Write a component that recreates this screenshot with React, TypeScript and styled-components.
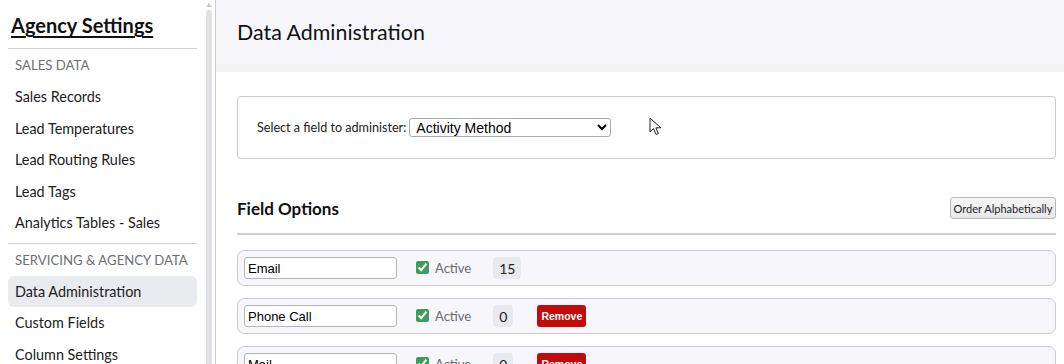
import React from "react";
import styled, { createGlobalStyle } from "styled-components";

const Global = createGlobalStyle`
  html, body { margin: 0; padding: 0; height: 100%; overflow: hidden; }
  body { font-family: "Lato", "Noto Sans", sans-serif; color: #212529; background: #fff; }
  * { box-sizing: border-box; }
`;

const Page = styled.div`
  display: flex;
  height: 100vh;
  overflow: hidden;
`;

const Sidebar = styled.aside`
  width: 216px;
  flex: 0 0 216px;
  height: 100%;
  display: flex;
  border-right: 1px solid #cfcfcf;
  overflow: hidden;
`;

const Nav = styled.nav`
  flex: 1;
  padding: 0 8px;
  min-width: 0;
`;

const ScrollTrack = styled.div`
  flex: 0 0 10px;
  display: flex;
  flex-direction: column;
  align-items: center;
  padding: 3px 3px 0 1px;
  gap: 3px;
`;

const ScrollArrow = styled.div`
  width: 0;
  height: 0;
  border-left: 3px solid transparent;
  border-right: 3px solid transparent;
  border-bottom: 4px solid #c8c8c8;
`;

const ScrollThumb = styled.div`
  flex: 1;
  width: 6px;
  background: #dfe1e4;
  border-radius: 3px 3px 0 0;
`;

const SideTitle = styled.h2`
  margin: 0;
  height: 48px;
  padding: 13px 0 0 3px;
  font-size: 20px;
  line-height: 24px;
  font-weight: 700;
  text-decoration: underline;
  text-underline-offset: 3px;
  text-decoration-thickness: 2px;
  color: #111;
`;

const Divider = styled.div<{ $top?: number }>`
  height: 1px;
  background: #cfcfcf;
  margin-top: ${(p) => p.$top ?? 0}px;
`;

const SectionHead = styled.div`
  height: 32px;
  line-height: 32px;
  padding: 0 7px;
  font-size: 13.2px;
  color: #6c6f74;
  text-transform: uppercase;
  white-space: nowrap;
`;

const NavItem = styled.div<{ $active?: boolean }>`
  height: 31.5px;
  line-height: 31.5px;
  padding: 0 7px;
  font-size: 14.4px;
  color: #1c1c1c;
  border-radius: 6px;
  white-space: nowrap;
  background: ${(p) => (p.$active ? "#e9ebef" : "transparent")};
`;

const Main = styled.main`
  flex: 1;
  display: flex;
  flex-direction: column;
  min-width: 0;
  position: relative;
`;

const Header = styled.header`
  flex: 0 0 72px;
  height: 72px;
  background: #f7f7fb;
  border-bottom: 8px solid #f4f4f4;
  padding: 0 21px;
  display: flex;
  align-items: center;
`;

const PageTitle = styled.h1`
  margin: 0;
  font-size: 21.4px;
  font-weight: 400;
  color: #111;
`;

const Content = styled.div`
  flex: 0 0 auto;
  padding: 24px 8px 0 21px;
  display: flex;
  flex-direction: column;
`;

const Card = styled.section`
  height: 63px;
  border: 1px solid #cccccc;
  border-radius: 4px;
  padding: 0 19px;
  display: flex;
  align-items: center;
  gap: 3px;
`;

const Label = styled.label`
  font-size: 12.6px;
  color: #222;
`;

const Select = styled.select`
  width: 202px;
  height: 19px;
  font-family: "Liberation Sans", Arial, sans-serif;
  font-size: 14px;
  color: #000;
  border: 1px solid #a9a9a9;
  border-radius: 3px;
  background: #fff;
  padding: 0 2px;
`;

const SectionBar = styled.div`
  margin-top: 38px;
  display: flex;
  align-items: center;
  justify-content: space-between;
  padding-bottom: 14px;
  border-bottom: 2px solid #cfcfcf;
`;

const SectionTitle = styled.h3`
  margin: 0;
  font-size: 17px;
  font-weight: 700;
  color: #111;
`;

const GrayButton = styled.button`
  height: 22px;
  width: 106px;
  padding: 0;
  font-family: "Lato", sans-serif;
  font-size: 11px;
  color: #222;
  background: linear-gradient(#f6f6f6, #e6e7ea);
  border: 1px solid #b9b9b9;
  border-radius: 3px;
`;

const Rows = styled.div`
  margin-top: 15px;
  display: flex;
  flex-direction: column;
  gap: 12px;
`;

const Row = styled.div`
  height: 36px;
  flex: 0 0 36px;
  border: 1px solid #cccccc;
  border-radius: 7px;
  background: #f7f7fb;
  padding: 0 6px;
  display: flex;
  align-items: center;
`;

const NameInput = styled.input`
  width: 153px;
  height: 22px;
  border: 1px solid #b5b5b5;
  border-radius: 3px;
  background: #fff;
  font-family: "Liberation Sans", Arial, sans-serif;
  font-size: 13px;
  color: #000;
  padding: 0 3px;
`;

const Check = styled.input`
  width: 13px;
  height: 13px;
  margin: 0 0 2px 19px;
  accent-color: #3e9b5e;
`;

const ActiveLabel = styled.span`
  margin-left: 6px;
  font-size: 13px;
  color: #6a6a6a;
`;

const Count = styled.span`
  margin-left: 22px;
  height: 22px;
  min-width: 20px;
  padding: 0 6px;
  border-radius: 4px;
  background: #e8eaed;
  font-size: 14px;
  color: #222;
  display: inline-flex;
  align-items: center;
  justify-content: center;
`;

const RemoveButton = styled.button`
  margin-left: 24px;
  height: 22px;
  width: 49px;
  padding: 0;
  border: none;
  border-radius: 3px;
  background: #c40b0b;
  color: #fff;
  font-family: "Liberation Sans", Arial, sans-serif;
  font-size: 10.5px;
  font-weight: 700;
`;

const Cursor = styled.svg`
  position: absolute;
  left: 433px;
  top: 117px;
  pointer-events: none;
`;

const salesItems = ["Sales Records", "Lead Temperatures", "Lead Routing Rules", "Lead Tags", "Analytics Tables - Sales"];
const servicingItems = ["Data Administration", "Custom Fields", "Column Settings"];

const options = [
  { name: "Email", count: 15, removable: false },
  { name: "Phone Call", count: 0, removable: true },
  { name: "Mail", count: 0, removable: true },
];

export default function App() {
  return (
    <>
      <Global />
      <Page>
        <Sidebar>
          <Nav>
            <SideTitle>Agency Settings</SideTitle>
            <Divider />
            <SectionHead>Sales Data</SectionHead>
            {salesItems.map((s) => (
              <NavItem key={s}>{s}</NavItem>
            ))}
            <Divider $top={4} />
            <SectionHead>Servicing &amp; Agency Data</SectionHead>
            {servicingItems.map((s) => (
              <NavItem key={s} $active={s === "Data Administration"}>
                {s}
              </NavItem>
            ))}
          </Nav>
          <ScrollTrack>
            <ScrollArrow />
            <ScrollThumb />
          </ScrollTrack>
        </Sidebar>
        <Main>
          <Header>
            <PageTitle>Data Administration</PageTitle>
          </Header>
          <Content>
            <Card>
              <Label htmlFor="field">Select a field to administer:</Label>
              <Select id="field" defaultValue="Activity Method">
                <option>Activity Method</option>
                <option>Lead Source</option>
              </Select>
            </Card>
            <SectionBar>
              <SectionTitle>Field Options</SectionTitle>
              <GrayButton>Order Alphabetically</GrayButton>
            </SectionBar>
            <Rows>
              {options.map((o) => (
                <Row key={o.name}>
                  <NameInput defaultValue={o.name} />
                  <Check type="checkbox" defaultChecked />
                  <ActiveLabel>Active</ActiveLabel>
                  <Count>{o.count}</Count>
                  {o.removable && <RemoveButton>Remove</RemoveButton>}
                </Row>
              ))}
            </Rows>
          </Content>
          <Cursor width="14" height="20" viewBox="0 0 14 20">
            <path d="M1 1 L1 15 L4.5 11.5 L7 17.5 L9.3 16.5 L6.9 10.8 L11.8 10.8 Z" fill="#fff" stroke="#222" strokeWidth="1" strokeLinejoin="round" />
          </Cursor>
        </Main>
      </Page>
    </>
  );
}
